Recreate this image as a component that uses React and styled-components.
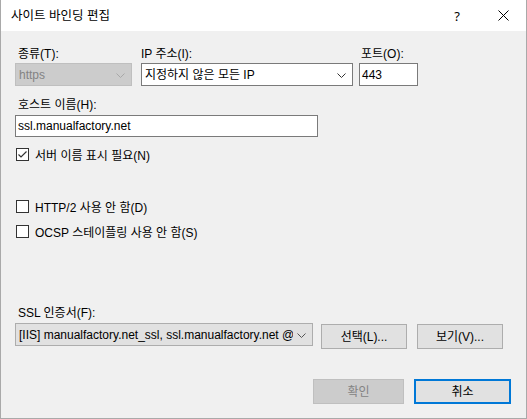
import React from "react";
import styled, { createGlobalStyle } from "styled-components";

const Global = createGlobalStyle`
  html, body { margin: 0; padding: 0; background: #f0f0f0; }
  body { font-family: "Liberation Sans", "Noto Sans CJK KR", sans-serif; font-size: 12px; color: #000; }
`;

const Window = styled.div`
  width: 527px;
  height: 419px;
  box-sizing: border-box;
  border: 1px solid #a9a9a9;
  border-top: none;
  display: flex;
  flex-direction: column;
  background: #f0f0f0;
  overflow: hidden;
`;

const TitleBar = styled.div`
  height: 31px;
  flex: none;
  background: #fff;
  display: flex;
  align-items: center;
  padding-left: 9px;
`;

const Title = styled.div`
  flex: 1;
  font-size: 12.5px;
  line-height: 16px;
  padding-left: 1px;
`;

const CaptionButton = styled.div`
  width: 46px;
  height: 31px;
  display: flex;
  align-items: center;
  justify-content: center;
  font-size: 13px;
  font-family: "Noto Sans", sans-serif;
`;

const Body = styled.div`
  flex: 1;
  display: flex;
  flex-direction: column;
  padding: 15px 0 0 14px;
`;

const Row = styled.div`
  display: flex;
  align-items: flex-start;
  margin-top: ${(p) => p.$mt || 0}px;
  padding-left: ${(p) => p.$pl || 0}px;
`;

const Field = styled.div`
  display: flex;
  flex-direction: column;
  width: ${(p) => p.$w}px;
  margin-left: ${(p) => p.$ml || 0}px;
  margin-top: ${(p) => p.$mt || 0}px;
`;

const Label = styled.div`
  line-height: 16px;
  height: 16px;
  padding-left: ${(p) => p.$pl ?? 3}px;
  margin-bottom: ${(p) => p.$mb ?? 1}px;
  white-space: nowrap;
`;

const Combo = styled.div`
  box-sizing: border-box;
  height: 23px;
  width: ${(p) => (p.$w ? p.$w + "px" : "100%")};
  display: flex;
  align-items: center;
  padding-left: 3px;
  border: 1px solid ${(p) => (p.$variant === "disabled" ? "#bfbfbf" : p.$variant === "list" ? "#adadad" : "#7a7a7a")};
  background: ${(p) => (p.$variant === "disabled" ? "#cccccc" : p.$variant === "list" ? "#e1e1e1" : "#fff")};
  color: ${(p) => (p.$variant === "disabled" ? "#838383" : "#000")};
`;

const ComboText = styled.div`
  flex: 1;
  min-width: 0;
  white-space: nowrap;
  overflow: hidden;
  text-overflow: clip;
  line-height: 16px;
`;

const Chevron = styled.svg`
  flex: none;
  width: 9px;
  height: 5px;
  margin: 1px 6px 0 4px;
`;

const TextBox = styled.div`
  box-sizing: border-box;
  width: ${(p) => p.$w}px;
  height: ${(p) => p.$h || 22}px;
  border: 1px solid #7a7a7a;
  background: #fff;
  display: flex;
  align-items: center;
  padding-left: 2px;
  line-height: 16px;
`;

const CheckRow = styled.div`
  display: flex;
  align-items: center;
  height: 16px;
  margin-top: ${(p) => p.$mt}px;
  padding-left: 1px;
`;

const Box = styled.div`
  box-sizing: border-box;
  width: 13px;
  height: 13px;
  border: 1px solid #333;
  background: #fff;
  display: flex;
  align-items: center;
  justify-content: center;
  margin-right: 6px;
`;

const Button = styled.div`
  box-sizing: border-box;
  width: ${(p) => p.$w}px;
  height: 25px;
  margin-left: ${(p) => p.$ml || 0}px;
  margin-top: ${(p) => p.$mt || 0}px;
  display: flex;
  align-items: center;
  justify-content: center;
  line-height: 16px;
  background: ${(p) => (p.$disabled ? "#cccccc" : "#e1e1e1")};
  color: ${(p) => (p.$disabled ? "#838383" : "#000")};
  border: ${(p) => (p.$default ? "2px solid #0078d7" : p.$disabled ? "1px solid #bfbfbf" : "1px solid #adadad")};
`;

const ChevronIcon = ({ color = "#333" }) => (
  <Chevron viewBox="0 0 9 5">
    <path d="M0.5 0.5 L4.5 4.5 L8.5 0.5" fill="none" stroke={color} strokeWidth="1" />
  </Chevron>
);

const CheckBox = ({ checked, children, mt }) => (
  <CheckRow $mt={mt}>
    <Box>
      {checked && (
        <svg width="11" height="11" viewBox="0 0 11 11">
          <path d="M1.5 5.5 L4 8 L9.5 2.5" fill="none" stroke="#333" strokeWidth="1.2" />
        </svg>
      )}
    </Box>
    {children}
  </CheckRow>
);

export default function App() {
  return (
    <>
      <Global />
      <Window>
        <TitleBar>
          <Title>사이트 바인딩 편집</Title>
          <CaptionButton>?</CaptionButton>
          <CaptionButton>
            <svg width="11" height="11" viewBox="0 0 11 11">
              <path d="M0.5 0.5 L10.5 10.5 M10.5 0.5 L0.5 10.5" stroke="#000" strokeWidth="1" fill="none" />
            </svg>
          </CaptionButton>
        </TitleBar>
        <Body>
          <Row>
            <Field $w={117}>
              <Label>종류(T):</Label>
              <Combo $variant="disabled">
                <ComboText>https</ComboText>
                <ChevronIcon color="#a8a8a8" />
              </Combo>
            </Field>
            <Field $w={212} $ml={9}>
              <Label $pl={0}>IP 주소(I):</Label>
              <Combo>
                <ComboText>지정하지 않은 모든 IP</ComboText>
                <ChevronIcon />
              </Combo>
            </Field>
            <Field $w={59} $ml={6}>
              <Label $pl={2}>포트(O):</Label>
              <TextBox $w={59} $h={23}>443</TextBox>
            </Field>
          </Row>
          <Field $w={303} $mt={11}>
            <Label $mb={2}>호스트 이름(H):</Label>
            <TextBox $w={303}>ssl.manualfactory.net</TextBox>
          </Field>
          <CheckBox checked mt={9}>서버 이름 표시 필요(N)</CheckBox>
          <CheckBox mt={36}>HTTP/2 사용 안 함(D)</CheckBox>
          <CheckBox mt={9}>OCSP 스테이플링 사용 안 함(S)</CheckBox>
          <Field $w={500} $mt={66}>
            <Label $mb={2}>SSL 인증서(F):</Label>
            <Row>
              <Combo $variant="list" $w={298}>
                <ComboText>[IIS] manualfactory.net_ssl, ssl.manualfactory.net @</ComboText>
                <ChevronIcon color="#555" />
              </Combo>
              <Button $w={86} $ml={8} $mt={1}>선택(L)...</Button>
              <Button $w={86} $ml={10} $mt={1}>보기(V)...</Button>
            </Row>
          </Field>
          <Row $mt={30} $pl={298}>
            <Button $w={91} $disabled>확인</Button>
            <Button $w={97} $ml={10} $default>취소</Button>
          </Row>
        </Body>
      </Window>
    </>
  );
}
